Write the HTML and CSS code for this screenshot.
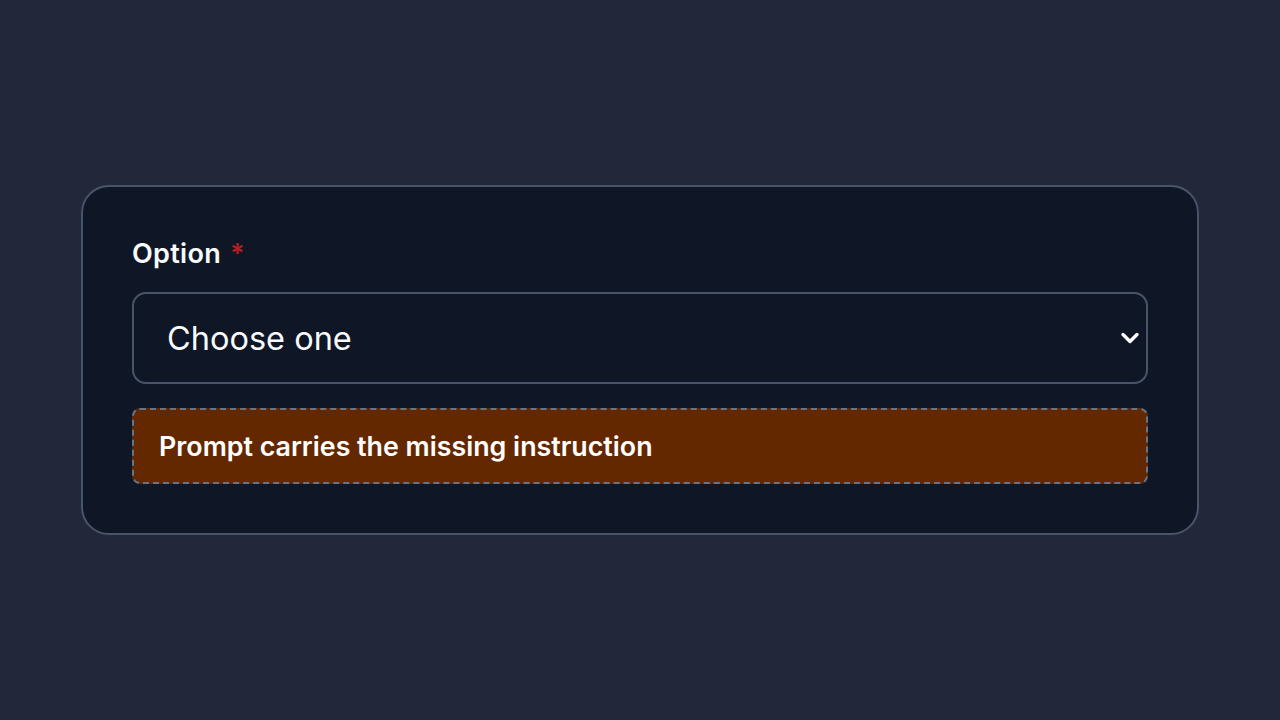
FILE: index.html
```html
<!DOCTYPE html>
<html>
<head>
<meta charset="utf-8">
<title>Option</title>
<link rel="stylesheet" href="styles.css">
</head>
<body>
<div class="wrap">
    <div class="card">
        <label class="label" for="opt">Option <span class="req">*</span></label>
        <div class="sel_box">
            <select id="opt" class="sel">
                <option>Choose one</option>
                <option>First</option>
                <option>Second</option>
            </select>
            <svg class="arrow" width="20" height="14" viewBox="0 0 20 14"><path d="M3 3.5 L10 10.5 L17 3.5" fill="none" stroke="#fff" stroke-width="3.4" stroke-linecap="round" stroke-linejoin="round"/></svg>
        </div>
        <div class="note">Prompt carries the missing instruction</div>
    </div>
</div>
</body>
</html>
```

FILE: styles.css
```css
*{margin:0;padding:0;box-sizing:border-box;}
html,body{height:100%;}
body{background:#222839;font-family:Inter,"Noto Sans",sans-serif;color:#f1f5f9;}
.wrap{height:100%;display:flex;align-items:center;justify-content:center;}
.card{width:1118px;background:#0f1726;border:2px solid #475569;border-radius:28px;padding:49px;display:flex;flex-direction:column;}
.label{font-size:27px;line-height:36px;font-weight:600;color:#f8fafc;margin-bottom:20px;letter-spacing:0.3px;}
.label .req{color:#b91c1c;margin-left:2px;}
.sel_box{position:relative;}
.sel{display:block;height:92px;width:100%;background:#0f1726;color:#f8fafc;border:2px solid #475569;border-radius:14px;font-family:inherit;font-size:32.5px;padding:0 33px;-webkit-appearance:none;appearance:none;outline:none;}
.arrow{position:absolute;right:8px;top:39px;pointer-events:none;}
.note{margin-top:24px;height:76px;background:#642800;border:2px dashed #64748b;border-radius:8px;padding:0 25px;display:flex;align-items:center;font-size:26.8px;font-weight:600;color:#fff;}
```
